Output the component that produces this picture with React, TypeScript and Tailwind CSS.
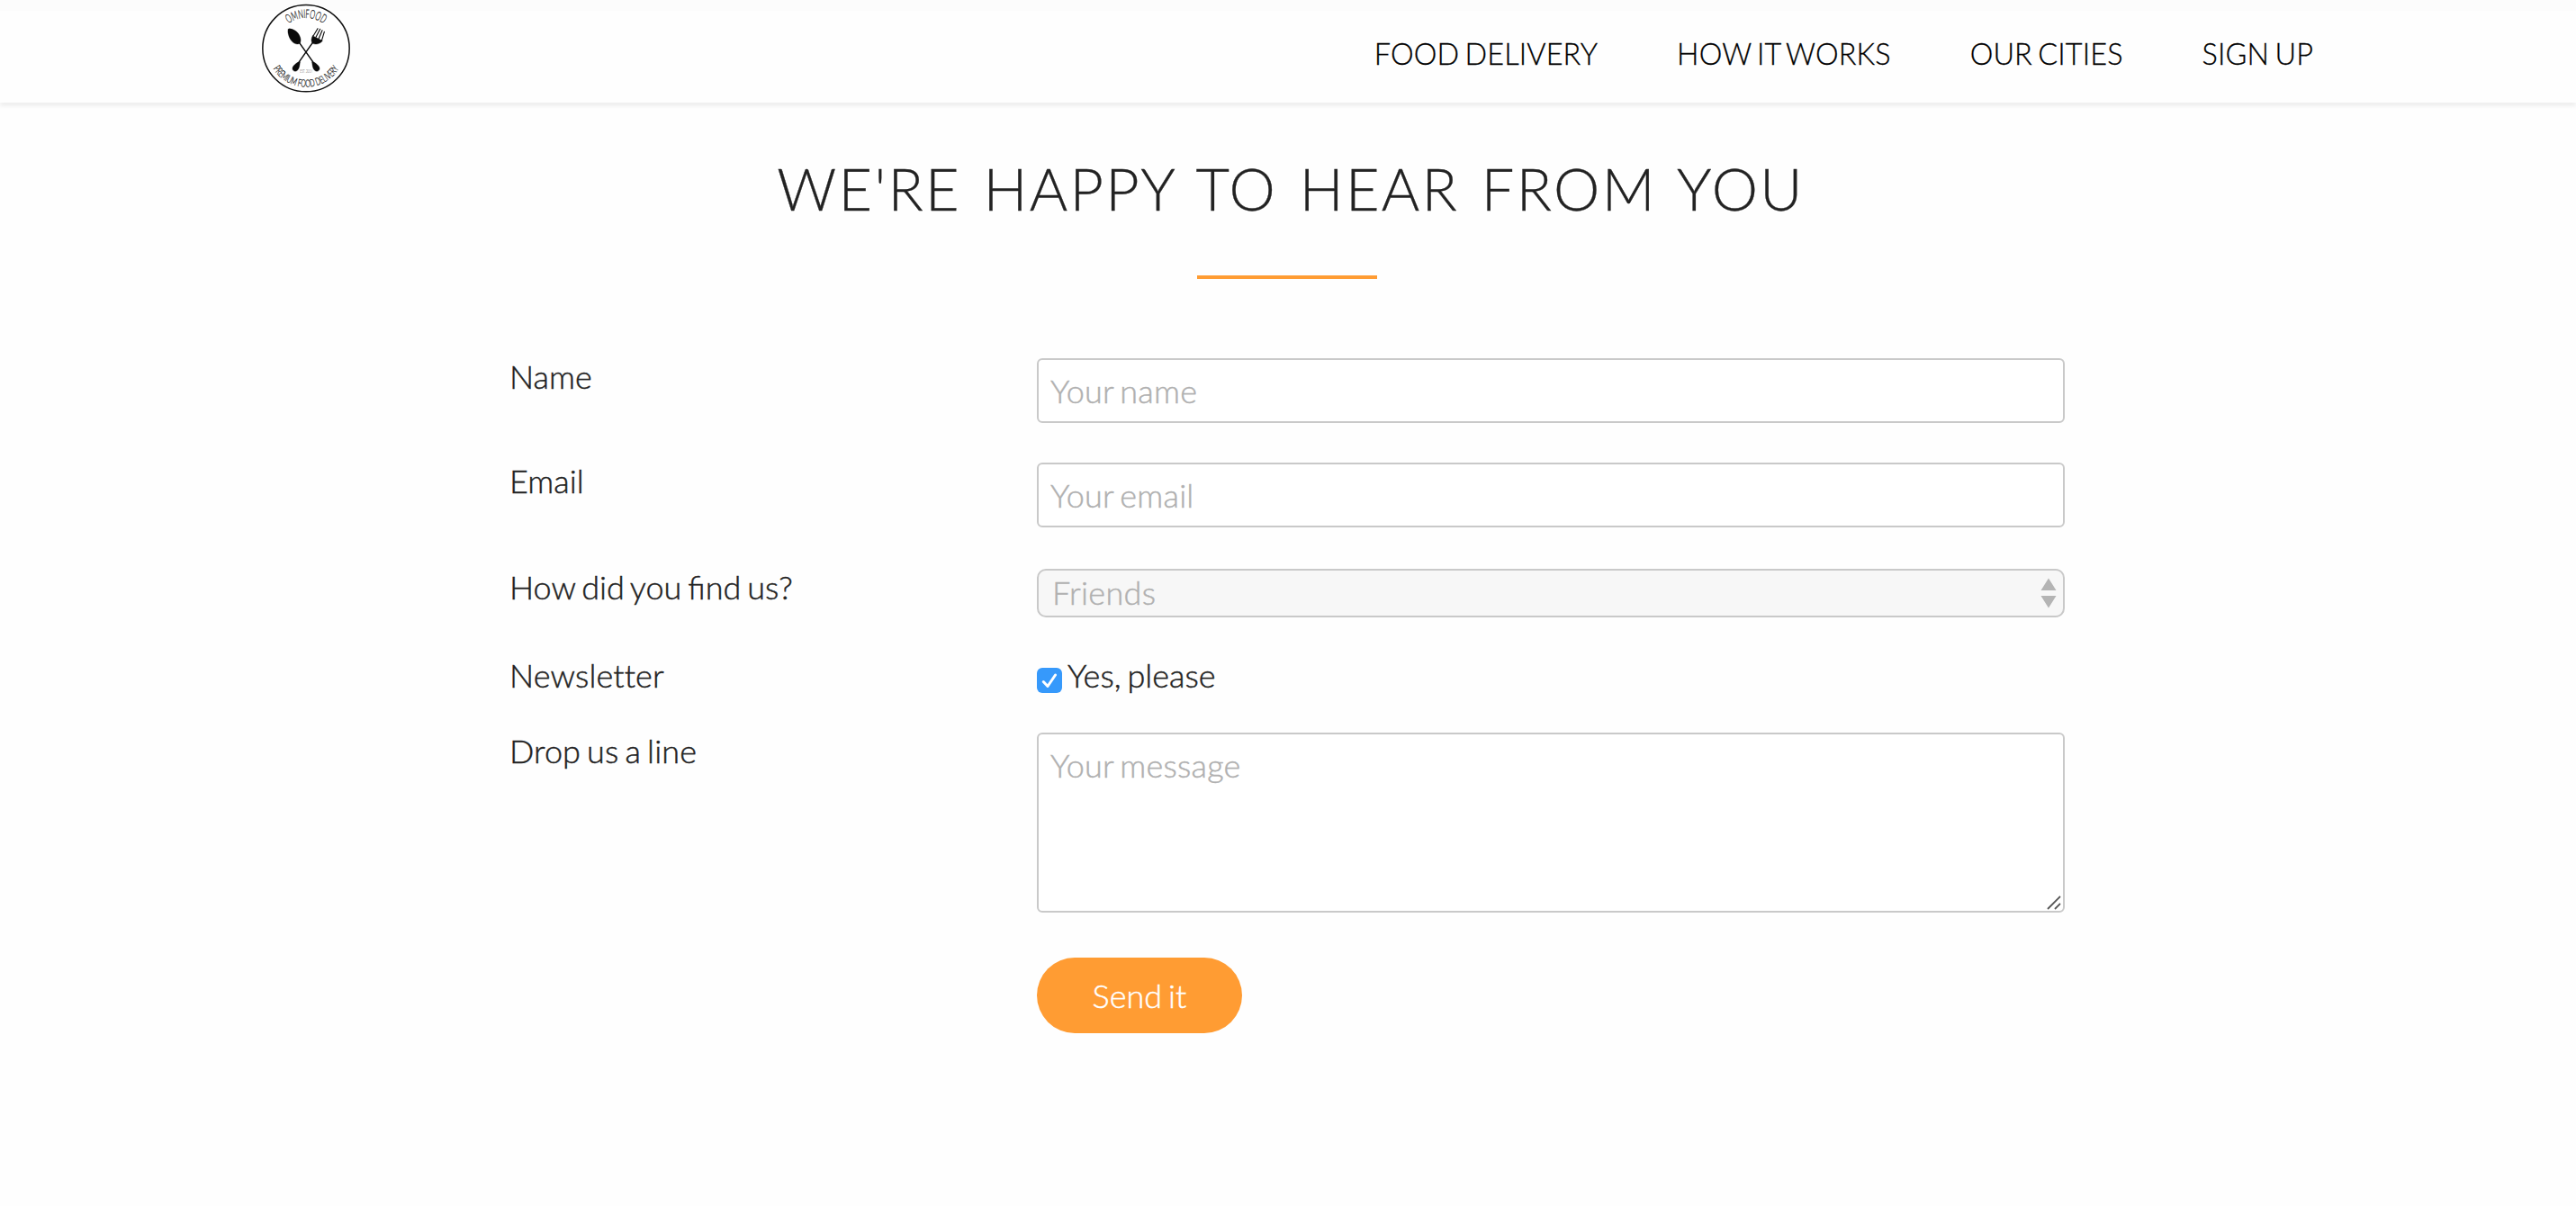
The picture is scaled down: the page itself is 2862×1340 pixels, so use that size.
import type { ReactNode } from "react";

const navItems = ["Food delivery", "How it works", "Our cities", "Sign up"];

function Logo() {
  return (
    <svg viewBox="30 12 300 300" className="size-[100px]" aria-label="Omnifood">
      <defs>
        <path id="arc-top" d="M 79 161 A 101 101 0 0 1 281 161" />
        <path id="arc-bottom" d="M 51 161 A 129 129 0 0 0 309 161" />
      </defs>
      <circle cx="180" cy="161" r="144.5" fill="#fff" stroke="#111" strokeWidth="4.5" />
      <text fontSize="40" fontWeight="300" fill="#111" stroke="#111" strokeWidth="0.8" textAnchor="middle">
        <textPath href="#arc-top" startOffset="50%" textLength="124" lengthAdjust="spacingAndGlyphs">
          OMNIFOOD
        </textPath>
      </text>
      <text fontSize="34" fontWeight="300" fill="#111" stroke="#111" strokeWidth="0.8" textAnchor="middle">
        <textPath href="#arc-bottom" startOffset="50%" textLength="262" lengthAdjust="spacingAndGlyphs">
          PREMIUM FOOD DELIVERY
        </textPath>
      </text>
      <text x="181" y="242" fontSize="17" fontWeight="300" fill="#333" textAnchor="middle" textLength="42" lengthAdjust="spacingAndGlyphs">
        EST. 2014
      </text>
      <g fill="#0b0b0b" stroke="#0b0b0b" strokeLinecap="round">
        <path d="M121 97 C127 92 150 101 158 118 C164 130 163 138 160 144 C154 149 143 148 134 139 C122 127 117 104 121 97Z" strokeWidth="1" />
        <path d="M158 143 L207 212" strokeWidth="4.5" />
        <path d="M200 207 C205 204 222 216 225 226 C227 236 217 241 209 235 C202 229 201 217 200 207Z" strokeWidth="1" />
        <path d="M202 142 L153 212" strokeWidth="4.5" />
        <path d="M160 207 C155 204 138 216 135 226 C133 236 143 241 151 235 C158 229 159 217 160 207Z" strokeWidth="1" />
        <path d="M202 119 L235 136 C227 147 213 150 202 145 C196 138 197 128 202 119Z" strokeWidth="1" />
        <path d="M204 120 L219 95 M213 124 L227 97 M222 130 L234 101 M232 136 L241 106" strokeWidth="3.4" />
      </g>
    </svg>
  );
}

function Header() {
  return (
    <header className="flex h-[114px] justify-between bg-[linear-gradient(#fcfcfc_12px,#fefefe_12px)] px-[290px] pt-1 shadow-[0_4px_4px_#efefef]">
      <Logo />
      <nav className="mr-0.5 flex gap-[88px] pt-9 text-[32.4px] leading-10 tracking-[0.12px] text-black uppercase [-webkit-text-stroke:0.3px] [word-spacing:-2.55px]">
        {navItems.map((item) => (
          <a key={item} href="#">
            {item}
          </a>
        ))}
      </nav>
    </header>
  );
}

function Row({ label, className, labelClass, children }: { label: string; className: string; labelClass: string; children: ReactNode }) {
  return (
    <div className={`grid grid-cols-[586px_1142px] items-start ${className}`}>
      <label className={`leading-[44px] ${labelClass}`}>{label}</label>
      {children}
    </div>
  );
}

const field =
  "block w-full border-2 border-[#c9c9c9] font-light text-[#555] placeholder:text-[#b0b0b0] placeholder:opacity-100 outline-none tracking-[0.2px] [word-spacing:-2.85px]";

export default function App() {
  return (
    <div className="h-[1340px] overflow-hidden bg-[#fefefe] font-['Lato',sans-serif] text-[36px] font-light text-[#222]">
      <Header />
      <main className="flex flex-col items-center pt-[53px] pr-0.5">
        <h2 className="pl-2 text-[64.8px] leading-[84px] tracking-[2.3px] whitespace-nowrap uppercase [-webkit-text-stroke:0.3px] [word-spacing:4.7px]">
          We're happy to hear from you
        </h2>
        <div className="mt-[55px] h-1 w-[200px] bg-[#ff9c33]" />
        <form className="mt-[88px] w-[1728px] [-webkit-text-stroke:0.45px] [word-spacing:-2.85px]">
          <Row label="Name" className="h-[116px]" labelClass="-mt-0.5">
            <input type="text" placeholder="Your name" className={`${field} h-[72px] rounded-md bg-white pr-3.5 pl-[13px] leading-[44px]`} />
          </Row>
          <Row label="Email" className="h-[118px]" labelClass="-mt-0.5">
            <input type="email" placeholder="Your email" className={`${field} h-[72px] rounded-md bg-white pr-3.5 pl-[13px] leading-[44px]`} />
          </Row>
          <Row label="How did you find us?" className="h-24" labelClass="-mt-0.5">
            <div className="relative">
              <select
                defaultValue="Friends"
                className="block h-[54px] w-full appearance-none rounded-[10px] border-2 border-[#c9c9c9] bg-[#f7f7f7] px-[15px] pb-0.5 leading-[44px] font-light tracking-[0.3px] text-[#b0b0b0] outline-none"
              >
                <option>Friends</option>
              </select>
              <svg viewBox="0 0 18 34" className="pointer-events-none absolute top-2.5 right-[9px] h-[34px] w-[18px]" fill="#b4b4b4">
                <path d="M9 0.5 17.5 14H0.5ZM9 33.5 17.5 20H0.5Z" />
              </svg>
            </div>
          </Row>
          <Row label="Newsletter" className="h-[86px]" labelClass="tracking-[0.1px] [font-variant-ligatures:none]">
            <div className="flex items-start gap-1.5 leading-[44px]">
              <span role="checkbox" aria-checked="true" className="mt-3.5 flex size-7 rounded-md bg-[#3699fb]">
                <svg viewBox="0 0 28 28" className="size-7" fill="none" stroke="#fff" strokeWidth="3" strokeLinecap="round" strokeLinejoin="round">
                  <path d="M7.3 15.5 12 20.5 20.5 8" />
                </svg>
              </span>
              Yes, please
            </div>
          </Row>
          <Row label="Drop us a line" className="h-[250px]" labelClass="-mt-0.5 tracking-[0.12px]">
            <div className="relative">
              <textarea placeholder="Your message" className={`${field} h-[200px] resize-none rounded-md bg-white py-3 pr-3.5 pl-[13px] leading-[44px]`} />
              <svg viewBox="0 0 16 16" className="pointer-events-none absolute right-1 bottom-[3px] size-4" stroke="#555" strokeWidth="1.8">
                <path d="M1 15 15 1M9 15 15 9" />
              </svg>
            </div>
          </Row>
          <button type="button" className="ml-[586px] block h-[84px] w-[228px] rounded-full bg-[#ff9c33] leading-[44px] font-light text-white [word-spacing:-2.85px]">
            Send it
          </button>
        </form>
      </main>
    </div>
  );
}
